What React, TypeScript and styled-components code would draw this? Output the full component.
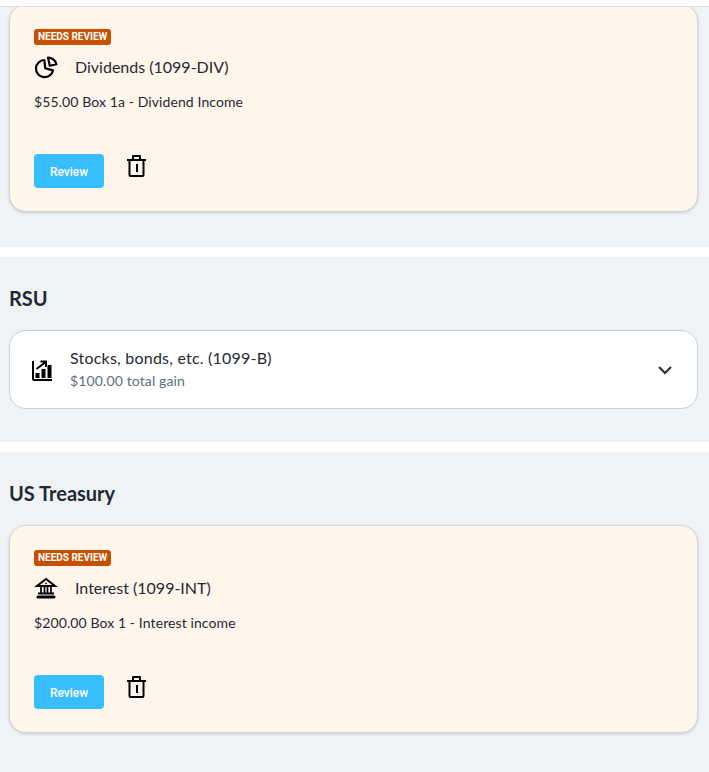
import React from "react";
import styled, { createGlobalStyle } from "styled-components";

const Global = createGlobalStyle`
  html, body { margin: 0; padding: 0; background: #fff; }
  body { font-family: "Lato", "Liberation Sans", sans-serif; overflow: hidden; }
`;

const Page = styled.div`
  width: 709px;
  height: 772px;
  overflow: hidden;
  display: flex;
  flex-direction: column;
  gap: 10px;
`;

const TopBar = styled.div`
  height: 6px;
  border-bottom: 1px solid #dcdfe3;
  margin-bottom: -10px;
  flex-shrink: 0;
`;

const Section = styled.section<{ $height: number; $top: number }>`
  height: ${(p) => p.$height}px;
  box-sizing: border-box;
  background: #eff3f6;
  padding: ${(p) => p.$top}px 11px 0 9px;
  flex-shrink: 0;
  overflow: hidden;
`;

const Heading = styled.h2`
  margin: 0 0 19px;
  font-size: 20px;
  line-height: 25px;
  font-weight: 700;
  color: #1f2933;
`;

const ReviewCard = styled.div<{ $lift?: number }>`
  box-sizing: border-box;
  height: 208px;
  margin-top: ${(p) => -(p.$lift ?? 0)}px;
  background: #fff6eb;
  border: 1px solid #d3d6d8;
  border-radius: 17px;
  box-shadow: 0 1px 3px rgba(40, 50, 60, 0.22);
  padding: 24px 24px 0;
  display: flex;
  flex-direction: column;
  align-items: flex-start;
`;

const Badge = styled.span`
  height: 16px;
  padding: 0 4px;
  border-radius: 3px;
  background: #c75000;
  color: #fff;
  font: 700 10px/16px "Roboto", "Liberation Sans", sans-serif;
`;

const TitleRow = styled.div`
  display: flex;
  align-items: center;
  gap: 17px;
  margin-top: 10px;
  height: 24px;
`;

const Title = styled.span`
  font-size: 16px;
  line-height: 24px;
  color: #1f2933;
`;

const Detail = styled.p`
  margin: 12px 0 0;
  font-size: 14px;
  line-height: 22px;
  letter-spacing: 0.1px;
  color: #1f2933;
`;

const Actions = styled.div`
  display: flex;
  align-items: flex-start;
  gap: 20px;
  margin-top: 41px;
`;

const ReviewButton = styled.button`
  width: 70px;
  height: 34px;
  padding: 1px 0 0;
  border: 0;
  border-radius: 4px;
  background: #38bdff;
  color: #fff;
  font: 500 12px "Roboto", "Liberation Sans", sans-serif;
`;

const TrashButton = styled.span`
  display: flex;
`;

const AccordionCard = styled.div`
  box-sizing: border-box;
  height: 79px;
  background: #fff;
  border: 1px solid #c6d0d8;
  border-radius: 17px;
  padding: 0 20px;
  display: flex;
  align-items: center;
  gap: 16px;
`;

const RowText = styled.div`
  flex: 1;
  display: flex;
  flex-direction: column;
  padding-bottom: 2px;
`;

const RowTitle = styled.span`
  font-size: 16px;
  line-height: 23px;
  letter-spacing: 0.22px;
  color: #1f2933;
`;

const RowSub = styled.span`
  font-size: 14px;
  line-height: 23px;
  letter-spacing: 0.13px;
  color: #616e7c;
`;

const PieIcon = () => (
  <svg width="24" height="24" viewBox="0 0 24 24" fill="none" stroke="#000" strokeWidth="2.2" strokeLinejoin="round">
    <path d="M10.4 5A8.6 8.6 0 1 0 19 15.4L11.2 13.2Z" />
    <path d="M14 2.6 15.8 10.8 22.4 9.2A8.8 8.8 0 0 0 14 2.6Z" />
  </svg>
);

const BankIcon = () => (
  <svg width="24" height="24" viewBox="0 0 24 24" fill="none" stroke="#000" strokeWidth="2" strokeLinejoin="miter">
    <path d="M3 10 12 3l9 7z" />
    <circle cx="12" cy="7.4" r="0.9" fill="#000" stroke="none" />
    <path d="M7 11v6M10.5 11v6M13.5 11v6M17 11v6" strokeWidth="1.7" />
    <path d="M4 17.5h16" />
    <rect x="3" y="20" width="18" height="2" rx="0.5" fill="#000" strokeWidth="1" />
  </svg>
);

const TrashIcon = () => (
  <svg width="24" height="24" viewBox="0 0 24 24" fill="none" stroke="#000" strokeWidth="2" strokeLinejoin="round">
    <path d="M3 6h19" />
    <path d="M9 6V2h7v4" />
    <path d="M5.5 6v15a1 1 0 0 0 1 1h12a1 1 0 0 0 1-1V6" />
    <path d="M13 10v8" />
  </svg>
);

const ChartIcon = () => (
  <svg width="24" height="24" viewBox="0 0 24 24" fill="none">
    <path d="M3 3v18a1 1 0 0 0 1 1h18" stroke="#000" strokeWidth="2" />
    <path d="M6.5 11 15 4.5M10.5 3.5H16V9" stroke="#000" strokeWidth="2" />
    <rect x="5.5" y="15" width="4" height="5" fill="#000" />
    <rect x="11.5" y="11" width="4" height="9" fill="#000" />
    <rect x="17.5" y="7" width="4" height="13" fill="#000" />
  </svg>
);

const Chevron = () => (
  <svg width="24" height="24" viewBox="0 0 24 24" fill="none" stroke="#2a3138" strokeWidth="2.2">
    <path d="M6 9l6 6 6-6" />
  </svg>
);

const Review = ({ icon, title, detail, lift }: { icon: React.ReactNode; title: string; detail: string; lift?: number }) => (
  <ReviewCard $lift={lift}>
    <Badge>NEEDS REVIEW</Badge>
    <TitleRow>
      {icon}
      <Title>{title}</Title>
    </TitleRow>
    <Detail>{detail}</Detail>
    <Actions>
      <ReviewButton>Review</ReviewButton>
      <TrashButton>
        <TrashIcon />
      </TrashButton>
    </Actions>
  </ReviewCard>
);

export default function App() {
  return (
    <Page>
      <Global />
      <TopBar />
      <Section $height={240} $top={0}>
        <Review icon={<PieIcon />} title="Dividends (1099-DIV)" detail="$55.00 Box 1a - Dividend Income" lift={3} />
      </Section>
      <Section $height={185} $top={29}>
        <Heading>RSU</Heading>
        <AccordionCard>
          <ChartIcon />
          <RowText>
            <RowTitle>Stocks, bonds, etc. (1099-B)</RowTitle>
            <RowSub>$100.00 total gain</RowSub>
          </RowText>
          <Chevron />
        </AccordionCard>
      </Section>
      <Section $height={330} $top={29}>
        <Heading>US Treasury</Heading>
        <Review icon={<BankIcon />} title="Interest (1099-INT)" detail="$200.00 Box 1 - Interest income" />
      </Section>
    </Page>
  );
}
